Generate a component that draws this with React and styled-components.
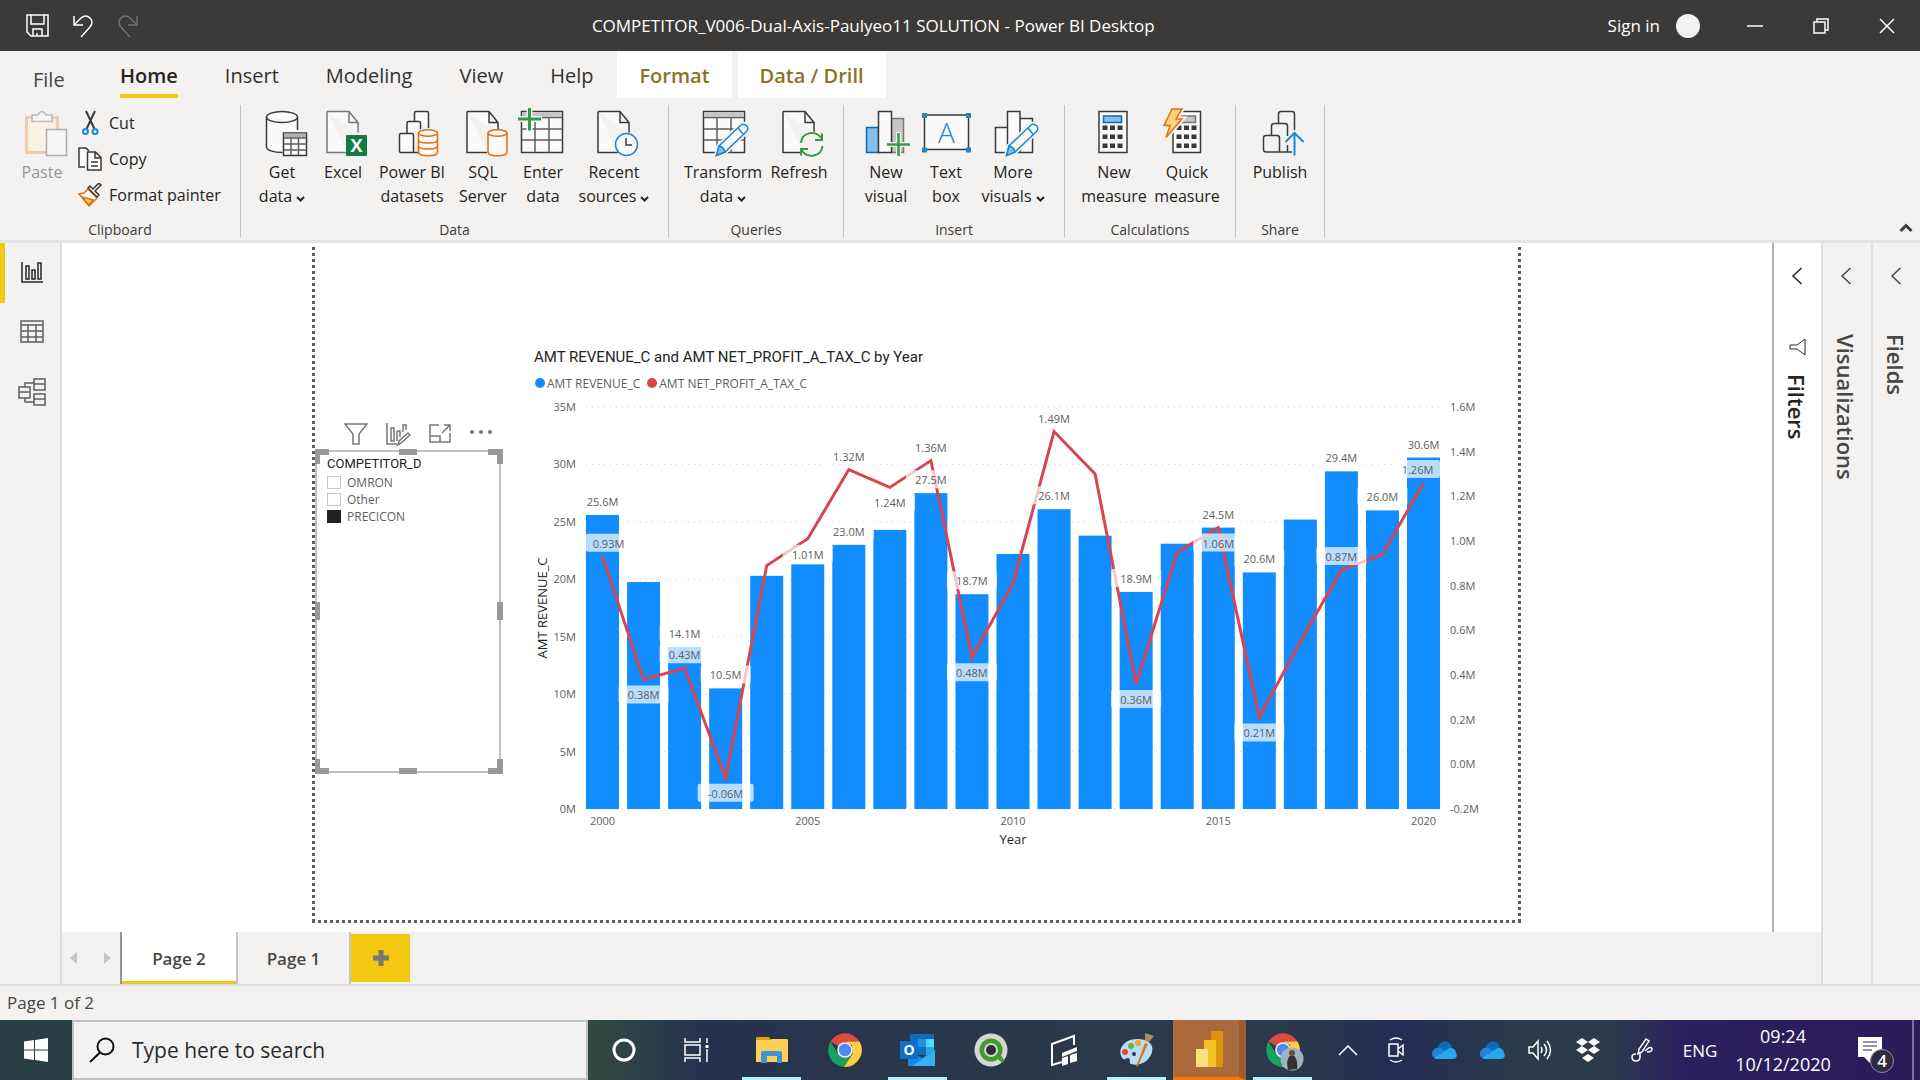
import React from 'react';
import styled, { createGlobalStyle, css } from 'styled-components';

const GlobalStyle = createGlobalStyle`
	* { box-sizing: border-box; }
	body {
		margin: 0;
		font-family: 'Open Sans', 'Noto Sans', sans-serif;
		color: #252423;
		background: #f3f2f1;
	}
	button, input {
		font-family: inherit;
		color: inherit;
	}
	button {
		border: 0;
		padding: 0;
		background: none;
	}
	svg {
		display: block;
		overflow: visible;
	}
`;

const Window = styled.div`
	display: flex;
	flex-direction: column;
	height: 100vh;
	overflow: hidden;
`;

/* title bar */

const TitleBar = styled.header`
	display: flex;
	align-items: center;
	flex: none;
	height: 51px;
	background: #3b3a38;
	color: #fff;
`;

const QuickAccess = styled.div`
	display: flex;
	gap: 23px;
	padding-left: 26px;
`;

const Title = styled.h1`
	flex: 1;
	margin: 0;
	font-size: 17px;
	font-weight: 400;
	line-height: 24px;
	text-align: center;
`;

const SignIn = styled.button`
	display: flex;
	align-items: center;
	gap: 16px;
	margin-right: 22px;
	font-size: 17px;
	line-height: 24px;
`;

const Avatar = styled.span`
	width: 24px;
	height: 24px;
	border-radius: 50%;
	background: #f3f2f1;
`;

const WindowButton = styled.button`
	display: flex;
	align-items: center;
	justify-content: center;
	width: 66px;
	height: 51px;
`;

/* ribbon */

const TabRow = styled.nav`
	display: flex;
	flex: none;
	height: 54px;
`;

const FileTab = styled.button`
	width: 97px;
	padding: 3px 0 0 33px;
	text-align: left;
	font-size: 20px;
	color: #484644;
`;

const Tab = styled.button`
	height: 47px;
	padding: 2px 24px 0 23px;
	font-size: 20px;
	line-height: 45px;
	color: #323130;

	span {
		display: block;
		height: 45px;
	}

	${(props) => props.$active && css`
		font-weight: 600;
		color: #252423;
		span { border-bottom: 4px solid #f2c811; }
	`}

	${(props) => props.$context && css`
		margin-right: 6px;
		padding: 2px 22px 0;
		font-weight: 600;
		color: #8c7324;
		background: #fff;
	`}
`;

const Ribbon = styled.section`
	display: flex;
	flex: none;
	height: 138px;
	border-bottom: 3px solid #e3e3e3;
`;

const Group = styled.div`
	display: flex;
	flex-direction: column;
	justify-content: space-between;
	width: ${(props) => props.$width}px;
	height: 133px;
	border-right: 1px solid #c8c6c4;
`;

const GroupBody = styled.div`
	display: flex;
	padding: 4px 0 0 ${(props) => props.$pad || 8}px;
`;

const GroupName = styled.div`
	font-size: 14px;
	line-height: 16px;
	text-align: center;
	color: #3b3a39;
`;

const BigButton = styled.button`
	display: flex;
	flex-direction: column;
	align-items: center;
	width: ${(props) => props.$width}px;
	font-size: 16px;
	line-height: 24px;
	white-space: nowrap;
	opacity: ${(props) => (props.disabled ? 0.45 : 1)};

	> svg { margin-bottom: 3px; }
	span svg {
		display: inline-block;
		margin-left: 4px;
	}
`;

const SmallButtons = styled.div`
	display: flex;
	flex-direction: column;
	gap: 8px;
	padding-left: 6px;
`;

const SmallButton = styled.button`
	display: flex;
	align-items: center;
	gap: 7px;
	height: 28px;
	font-size: 16px;
	line-height: 24px;
	white-space: nowrap;
`;

const CollapseButton = styled.button`
	align-self: flex-end;
	margin: 0 7px 8px auto;
`;

/* work area */

const Work = styled.div`
	display: flex;
	flex: 1;
	min-height: 0;
`;

const ViewNav = styled.nav`
	flex: none;
	width: 62px;
	border-right: 2px solid #e1dfdd;
`;

const ViewButton = styled.button`
	display: flex;
	align-items: center;
	justify-content: center;
	width: 60px;
	height: 60px;
	padding: ${(props) => (props.$active ? '0 2px 2px 0' : '0 0 2px 4px')};
	border-left: ${(props) => (props.$active ? '5px solid #f2c811' : '0')};
`;

const Center = styled.div`
	display: flex;
	flex-direction: column;
	flex: 1;
	min-width: 0;
`;

const Panels = styled.div`
	display: flex;
	flex: 1;
	min-height: 0;
`;

const Canvas = styled.main`
	flex: 1;
	min-width: 0;
	padding: 4px 251px 9px 250px;
	background: #fff;
`;

const dots = (dir) => `repeating-linear-gradient(${dir}, #5c5c5c 0 3px, transparent 3px 6px)`;

const ReportPage = styled.div`
	position: relative;
	height: 100%;
	background:
		${dots('to bottom')} left top / 3px 100% no-repeat,
		${dots('to bottom')} right top / 3px 100% no-repeat,
		${dots('to right')} left bottom / 100% 3px no-repeat;
`;

const Slicer = styled.section`
	position: absolute;
	left: 3px;
	top: 203px;
	width: 186px;
	height: 323px;
	padding: 3px 10px;
	border: 2px solid #c0c0c0;
`;

const handleSpots = {
	nw: 'left: -2px; top: -3px; width: 14px; height: 15px; border-width: 6px 0 0 5px;',
	ne: 'right: -4px; top: -3px; width: 15px; height: 15px; border-width: 6px 6px 0 0;',
	sw: 'left: -2px; bottom: -3px; width: 14px; height: 15px; border-width: 0 0 6px 5px;',
	se: 'right: -4px; bottom: -3px; width: 15px; height: 15px; border-width: 0 6px 6px 0;',
	n: 'left: 82px; top: -3px; width: 18px; border-width: 6px 0 0;',
	s: 'left: 82px; bottom: -3px; width: 18px; border-width: 6px 0 0;',
	w: 'left: -2px; top: 150px; height: 18px; border-width: 0 0 0 5px;',
	e: 'right: -4px; top: 150px; height: 18px; border-width: 0 0 0 6px;',
};

const Handle = styled.i`
	position: absolute;
	border: 0 solid #999;
	${(props) => handleSpots[props.$spot]}
`;

const VisualTools = styled.div`
	position: absolute;
	right: 5px;
	top: -30px;
	display: flex;
	gap: 18px;
`;

const SlicerTitle = styled.h2`
	margin: 0 0 1px;
	font-family: Roboto, sans-serif;
	font-size: 13px;
	font-weight: 400;
	line-height: 18px;
`;

const Option = styled.label`
	display: flex;
	align-items: center;
	gap: 6px;
	height: 17px;
	font-size: 12px;
	color: #605e5c;

	input {
		appearance: none;
		width: 14px;
		height: 13px;
		margin: 0;
		border: 1px solid #c8c8c8;
		background: #fff;
	}
	input:checked {
		border-color: #212121;
		background: #212121;
	}
`;

const ChartVisual = styled.section`
	position: absolute;
	left: 220px;
	right: 30px;
	top: 98px;
`;

const ChartTitle = styled.h2`
	margin: 0 0 4px 2px;
	font-family: Roboto, sans-serif;
	font-size: 15px;
	font-weight: 400;
	line-height: 24px;
`;

const Legend = styled.div`
	display: flex;
	align-items: center;
	gap: 7px;
	height: 20px;
	margin-left: 3px;
	font-size: 12px;
	color: #605e5c;
`;

const LegendItem = styled.span`
	display: flex;
	align-items: center;
	gap: 2px;

	&::before {
		content: '';
		width: 10px;
		height: 10px;
		border-radius: 50%;
		background: ${(props) => props.$color};
	}
`;

const Plot = styled.svg`
	width: 100%;
	font-size: 11px;
	fill: #605e5c;
`;

/* collapsed panes on the right */

const Pane = styled.aside`
	display: flex;
	flex-direction: column;
	align-items: center;
	flex: none;
	width: ${(props) => props.$width}px;
	padding: 24px 2px 0 0;
	border-left: ${(props) => props.$edge};
	background: ${(props) => props.$bg || '#f3f2f1'};
	color: ${(props) => props.$color || '#484644'};
`;

const PaneButton = styled.button`
	height: 18px;
	margin-bottom: ${(props) => props.$gap}px;
`;

const PaneName = styled.h2`
	margin: ${(props) => props.$gap || 0}px 0 0;
	writing-mode: vertical-rl;
	font-size: 22px;
	font-weight: 600;
	line-height: 26px;
`;

/* page tabs, status */

const PageTabs = styled.div`
	display: flex;
	flex: none;
	height: 52px;
`;

const PageArrows = styled.div`
	display: flex;
	align-items: center;
	justify-content: space-between;
	width: 58px;
	padding: 0 9px 0 8px;
`;

const PageTab = styled.button`
	width: ${(props) => (props.$active ? 118 : 113)}px;
	border-right: 2px solid #c8c6c4;
	font-size: 17px;
	font-weight: 600;
	color: #484644;

	${(props) => props.$active && css`
		border-left: 2px solid #979593;
		background: #fff;
		box-shadow: inset 0 -3px #f2c811;
	`}
`;

const AddPage = styled.button`
	display: flex;
	align-items: center;
	justify-content: center;
	width: 59px;
	height: 48px;
	margin-top: 2px;
	background: #f2c811;
`;

const StatusBar = styled.footer`
	flex: none;
	height: 36px;
	padding-left: 7px;
	border-top: 2px solid #e1dfdd;
	font-size: 17px;
	line-height: 33px;
	color: #484644;
`;

/* windows taskbar */

const Taskbar = styled.footer`
	display: flex;
	flex: none;
	height: 60px;
	color: #fff;
	background: linear-gradient(to right, #273e42 0, #273e42 72px, #334a3f 590px, #2b4149 640px, #26314f 700px,
		#28364c 860px, #2b3a4b 1150px, #2b3a4b 1280px, #242c53 1400px, #2b3b4b 1520px, #2b3b4b 1610px, #2c1f60 1680px, #2a1c59 100%);
`;

const StartButton = styled.button`
	display: flex;
	align-items: center;
	justify-content: center;
	width: 72px;
`;

const SearchBox = styled.label`
	display: flex;
	align-items: center;
	gap: 15px;
	width: 516px;
	padding-left: 15px;
	border: 2px solid #c0c0c0;
	background: #f2f2f2;
	color: #111;

	input {
		flex: 1;
		border: 0;
		background: none;
		font-size: 21px;
		outline: 0;
	}
	input::placeholder {
		color: #2b2b2b;
		opacity: 1;
	}
`;

const Apps = styled.div`
	display: flex;
	padding-right: 3px;
`;

const AppButton = styled.button`
	display: flex;
	align-items: center;
	justify-content: center;
	width: ${(props) => (props.$system ? 72 : 73)}px;

	${(props) => props.$open && css`
		background: linear-gradient(#b3f1ff, #b3f1ff) center bottom / 59px 3px no-repeat;
	`}
	${(props) => props.$current && css`
		padding-left: 7px;
		border-right: 7px solid #9c5d30;
		border-bottom: 3px solid #ff7300;
		background: #ab6a3b;
	`}
`;

const Tray = styled.div`
	display: flex;
	align-items: center;
	margin-left: auto;
`;

const TrayButton = styled.button`
	display: flex;
	align-items: center;
	justify-content: center;
	width: ${(props) => props.$width || 48}px;
	height: 60px;
	font-size: 17px;
`;

const Clock = styled.time`
	width: 110px;
	font-size: 18px;
	line-height: 28px;
	text-align: center;
`;

const Notifications = styled.button`
	position: relative;
	width: 74px;
	height: 60px;
	padding-left: 20px;
`;

const Badge = styled.span`
	position: absolute;
	left: 32px;
	top: 29px;
	width: 24px;
	height: 24px;
	border: 1px solid #918e9c;
	border-radius: 50%;
	background: #2d2b3e;
	font-size: 17px;
	font-weight: 600;
	line-height: 22px;
`;

const ShowDesktop = styled.button`
	width: 8px;
	height: 60px;
	border-left: 2px solid #77709a;
`;

/* icons */

const dark = '#3b3a39';
const gray = '#797775';
const orange = '#e0720f';
const green = '#37984b';
const blue = '#1e88cf';

const Icon = ({ w = 24, h = w, children, ...rest }) => (
	<svg width={w} height={h} viewBox={`0 0 ${w} ${h}`} fill="none" stroke="currentColor" aria-hidden="true" {...rest}>
		{children}
	</svg>
);

const BigIcon = ({ children }) => (
	<Icon w={48} stroke={dark} strokeWidth="1.5">{children}</Icon>
);

const Sheet = ({ color = dark }) => (
	<path d="M8 2.5h22l9 11v10M8 2.5v41h20M30 2.5v11h9" stroke={color} fill="#fafafa" />
);

const Cylinder = ({ x, rings }) => (
	<g stroke={orange} fill="#fafafa" strokeWidth="1.6">
		<path d={`M${x} 24v19c0 5 19 5 19 0V24`} />
		<ellipse cx={x + 9.5} cy="24" rx="9.5" ry="3.3" />
		{rings && <path fill="none" d={`M${x} 31c0 4 19 4 19 0M${x} 37c0 4 19 4 19 0`} />}
	</g>
);

const Grid = ({ x }) => (
	<g>
		<path d={`M${x} 2.5h41v41h-41z`} fill="#fafafa" />
		<path d={`M${x + 1} 3.5h39v4h-39z`} fill="#c8c6c4" stroke="none" />
		<path d={`M${x} 8.5h41M${x} 20h41M${x} 31h41M${x + 13.5} 8.5v35M${x + 27.5} 8.5v35`} stroke="#605e5c" />
	</g>
);

const Pencil = () => (
	<g>
		<path d="M17.5 46.5L20 37 42 16q3-2 6 1 2 3-1 6L26 43z" stroke="#f3f2f1" strokeWidth="5" />
		<path d="M17.5 46.5L20 37 42 16q3-2 6 1 2 3-1 6L26 43z" stroke={blue} fill="#fafafa" />
		<path d="M17.5 46.5L20 37q5 1 6 6z" stroke={blue} fill="#83beec" />
		<path d="M39 19l5 6" stroke={blue} />
	</g>
);

const Keys = ({ x }) => [19, 28, 37].map((y) => [0, 7.5, 15].map((dx) => (
	<rect key={`${y}-${dx}`} x={x + dx - 2.5} y={y - 2.5} width="5" height="4.5" fill={dark} stroke="none" />
)));

const ArrowDown = () => (
	<Icon w={9} h={6} stroke="#252423" strokeWidth="2"><path d="M1 1l3.5 3.5L8 1" /></Icon>
);

const icons = {
	getData: (
		<BigIcon>
			<path d="M8.5 8v30c0 3 7 5.5 16 5.5V26h15V8" fill="#fafafa" stroke="none" />
			<path d="M8.5 8v30c0 3 7 5.5 16 5.5M39.5 8v13" />
			<ellipse cx="24" cy="8" rx="15.5" ry="5.5" fill="#fafafa" />
			<path d="M25.5 24h23v22.5h-23z" fill="#fafafa" />
			<path d="M26 24.5h22v4H26z" fill="#b3b0ad" stroke="none" />
			<path d="M25.5 29h23M25.5 35h23M25.5 41h23M33 29v17M40.5 29v17" stroke="#605e5c" />
		</BigIcon>
	),
	excel: (
		<BigIcon>
			<Sheet color="#797775" />
			<rect x="27" y="26" width="21" height="21" rx="1" fill="#107c41" stroke="none" />
			<text x="37.5" y="43" fontSize="18" fontWeight="700" textAnchor="middle" fill="#fff" stroke="none">X</text>
		</BigIcon>
	),
	pbi: (
		<BigIcon>
			<g fill="#fafafa">
				<path d="M26.5 12V4q0-1.5 1.5-1.5h11q1.5 0 1.5 1.5v15" />
				<path d="M19 24V14q0-1.5 1.5-1.5H31q1.5 0 1.5 1.5v6" />
				<path d="M30 43.5H13q-1.5 0-1.5-1.5V26q0-1.5 1.5-1.5h11q1.5 0 1.5 1.5v17.5" />
			</g>
			<Cylinder x={30.5} rings />
		</BigIcon>
	),
	sql: <BigIcon><Sheet /><Cylinder x={29} /></BigIcon>,
	enter: (
		<BigIcon>
			<Grid x={2.5} />
			<path d="M-2 10h25M10.5-2v25" stroke="#f3f2f1" strokeWidth="6" />
			<path d="M-1 10h23M10.5-1v22.5" stroke={green} strokeWidth="3" />
		</BigIcon>
	),
	recent: (
		<BigIcon>
			<Sheet />
			<circle cx="36.5" cy="35.5" r="11" fill="#fafafa" stroke={blue} />
			<path d="M36 29v7h6" />
		</BigIcon>
	),
	transform: <BigIcon><Grid x={4.5} /><Pencil /></BigIcon>,
	refresh: (
		<BigIcon>
			<Sheet />
			<circle cx="37" cy="35.5" r="13" fill="#f3f2f1" stroke="none" />
			<path d="M26 34c1-12 16-13 21-4M47 24.5V31h-7M47.5 37c-1 11-15 13-21 4M26 46.5V40h7" stroke={green} strokeWidth="2" />
		</BigIcon>
	),
	newVisual: (
		<BigIcon>
			<path d="M4.5 18.5h12v25h-12z" fill="#83beec" stroke="#1068b0" />
			<path d="M29.5 9.5h12v34h-12z" fill="#c8c6c4" stroke="#797775" />
			<path d="M16.5 2.5h13v41h-13z" fill="#fafafa" />
			<path d="M24 35.5h25M36.5 23v25" stroke="#f3f2f1" strokeWidth="5" />
			<path d="M25 35.5h23M36.5 24v23" stroke={green} strokeWidth="2.5" />
		</BigIcon>
	),
	textBox: (
		<BigIcon>
			<path d="M2.5 6h44v34.5h-44z" fill="#fafafa" />
			<path d="M0 4h5v5H0zM44 4h5v5h-5zM0 38.5h5v5H0zM44 38.5h5v5h-5z" fill={blue} stroke="none" />
			<text x="24.5" y="34" fontSize="28" fontWeight="300" textAnchor="middle" fill={blue} stroke="none">A</text>
		</BigIcon>
	),
	moreVisuals: (
		<BigIcon>
			<path d="M6.5 18.5h12v25h-12zM31 9.5h12.5v34H31zM18.5 2.5H31v41H18.5z" fill="#fafafa" />
			<Pencil />
		</BigIcon>
	),
	newMeasure: (
		<BigIcon>
			<path d="M9 2.5h28v41H9z" fill="#fafafa" />
			<path d="M13.5 7h18v6.5h-18z" fill="#83beec" stroke="#1068b0" />
			<Keys x={15} />
		</BigIcon>
	),
	quickMeasure: (
		<BigIcon>
			<path d="M10 2.5h27.5v41H10z" fill="#fafafa" />
			<path d="M14.5 7h18v6.5h-18z" fill="#c8c6c4" stroke="#797775" />
			<Keys x={16} />
			<path d="M9 0h10l-6 10h6L3 28.500l4-12H1z" stroke="#f3f2f1" strokeWidth="5" />
			<path d="M9 0h10l-6 10h6L3 28.500l4-12H1z" fill="#fbd27c" stroke={orange} />
		</BigIcon>
	),
	publish: (
		<BigIcon>
			<path d="M22.5 14V5q0-2.5 2.5-2.5h11q2.5 0 2.5 2.5v16M15.5 26v-9q0-2.5 2.5-2.5h11q2.5 0 2.5 2.5v10M31.5 36v7M36 43H10q-2.5 0-2.5-2.5V29q0-2.5 2.5-2.5h11q2.5 0 2.5 2.5v14" />
			<path d="M38.5 46.5V24M29.5 33l9-9 9 9" stroke={blue} strokeWidth="2" />
		</BigIcon>
	),
	paste: (
		<BigIcon>
			<path d="M8.5 8.5h31v35h-31z" fill="#fdf3d4" stroke="#eda05e" strokeWidth="3" />
			<path d="M14 12.5V6h6q4-7 8 0h6v6.5z" fill="#fafafa" stroke="#797775" />
			<path d="M28.5 20.5h20v26h-20z" fill="#fafafa" stroke="#605e5c" />
		</BigIcon>
	),
	cut: (
		<Icon stroke={dark} strokeWidth="2">
			<path d="M8 0l8.5 18M17 0L8.5 18" />
			<circle cx="7.5" cy="20.5" r="2.5" stroke={blue} />
			<circle cx="17" cy="20.5" r="2.5" stroke={blue} />
		</Icon>
	),
	copy: (
		<Icon stroke={dark} strokeWidth="1.5">
			<path d="M7 20H1V1h7l3 3" fill="#fafafa" />
			<path d="M9.5 5h8l5.5 5.5V23H9.5zM17 5v6h6M13 15h7M13 19h7" fill="#fafafa" />
		</Icon>
	),
	painter: (
		<Icon strokeWidth="1.5">
			<path d="M1 11l5-1 4-4 9 9-3 3-5 5z" stroke={orange} fill="#fafafa" />
			<path d="M4 14l11 3-4 5z" stroke={orange} fill="#fbd27c" />
			<path d="M10 5l9 9 2-2-4-4 6-6-1.5-1.5L20 1l-5 5-3-3z" stroke={dark} fill="#fafafa" />
		</Icon>
	),
};

const ribbonGroups = [
	{ name: 'Data', width: 428, items: [
		['getData', ['Get', 'data'], 66, true],
		['excel', ['Excel'], 56],
		['pbi', ['Power BI', 'datasets'], 82],
		['sql', ['SQL', 'Server'], 60],
		['enter', ['Enter', 'data'], 60],
		['recent', ['Recent', 'sources'], 82, true],
	] },
	{ name: 'Queries', width: 175, items: [
		['transform', ['Transform', 'data'], 92, true],
		['refresh', ['Refresh'], 60],
	] },
	{ name: 'Insert', width: 221, items: [
		['newVisual', ['New', 'visual'], 68],
		['textBox', ['Text', 'box'], 52],
		['moreVisuals', ['More', 'visuals'], 82, true],
	] },
	{ name: 'Calculations', width: 171, pad: 12, items: [
		['newMeasure', ['New', 'measure'], 74],
		['quickMeasure', ['Quick', 'measure'], 72],
	] },
	{ name: 'Share', width: 89, items: [
		['publish', ['Publish'], 72],
	] },
];

const RibbonBar = () => (
	<Ribbon>
		<Group $width={241}>
			<GroupBody $pad={12}>
				<BigButton $width={60} disabled>{icons.paste}<span>Paste</span></BigButton>
				<SmallButtons>
					<SmallButton>{icons.cut}Cut</SmallButton>
					<SmallButton>{icons.copy}Copy</SmallButton>
					<SmallButton>{icons.painter}Format painter</SmallButton>
				</SmallButtons>
			</GroupBody>
			<GroupName>Clipboard</GroupName>
		</Group>
		{ribbonGroups.map((group) => (
			<Group key={group.name} $width={group.width}>
				<GroupBody $pad={group.pad}>
					{group.items.map(([icon, lines, width, menu]) => (
						<BigButton key={icon} $width={width}>
							{icons[icon]}
							{lines.map((line, i) => (
								<span key={line}>{line}{menu && i === 1 && <ArrowDown />}</span>
							))}
						</BigButton>
					))}
				</GroupBody>
				<GroupName>{group.name}</GroupName>
			</Group>
		))}
		<CollapseButton aria-label="Collapse ribbon">
			<Icon w={14} h={9} stroke={dark} strokeWidth="3"><path d="M1.5 8L7 2.5 12.5 8" /></Icon>
		</CollapseButton>
	</Ribbon>
);

/* chart */

// year, revenue (M), net profit (M), revenue label, profit label and its side
const series = [
	[2000, 25.6, 0.93, '25.6M', '0.93M', 'up'],
	[2001, 19.76, 0.38, '', '0.38M', 'down'],
	[2002, 14.1, 0.43, '14.1M', '0.43M', 'up'],
	[2003, 10.5, -0.06, '10.5M', '-0.06M', 'down'],
	[2004, 20.3, 0.89],
	[2005, 21.3, 1.01, '', '1.01M', 'down'],
	[2006, 23, 1.32, '23.0M', '1.32M', 'up'],
	[2007, 24.3, 1.24, '', '1.24M', 'down'],
	[2008, 27.5, 1.36, '27.5M', '1.36M', 'up'],
	[2009, 18.7, 0.48, '18.7M', '0.48M', 'down'],
	[2010, 22.2, 0.81],
	[2011, 26.1, 1.49, '26.1M', '1.49M', 'up'],
	[2012, 23.8, 1.3],
	[2013, 18.9, 0.36, '18.9M', '0.36M', 'down'],
	[2014, 23.1, 0.95],
	[2015, 24.5, 1.06, '24.5M', '1.06M', 'down'],
	[2016, 20.6, 0.21, '20.6M', '0.21M', 'down'],
	[2017, 25.2, 0.55],
	[2018, 29.4, 0.87, '29.4M', '0.87M', 'up'],
	[2019, 26, 0.94, '26.0M'],
	[2020, 30.6, 1.26, '30.6M', '1.26M', 'up'],
];

const plotLeft = 54;
const plotRight = 908;
const top = 14;
const bottom = 416;
const barX = (i) => plotLeft + i * 41.05;
const midX = (i) => barX(i) + 16.5;
const revenueY = (v) => bottom - (v / 35) * (bottom - top);
const profitY = (v) => bottom - ((v + 0.2) / 1.8) * (bottom - top);

const DataLabel = ({ x, y, text }) => {
	const half = text.length > 5 ? 28 : 25;
	const left = Math.max(x - half, plotLeft);
	const right = Math.min(x + half, plotRight);
	return (
		<g>
			<rect x={left} y={y - 10} width={right - left} height="18" rx="2" fill="#fff" fillOpacity="0.7" />
			<text x={x} y={y + 4} textAnchor="middle">{text}</text>
		</g>
	);
};

const ComboChart = () => (
	<Plot viewBox="0 0 959 464" role="img" aria-label="Revenue and net profit by year">
		{[0, 5, 10, 15, 20, 25, 30, 35].map((v) => (
			<g key={v}>
				<line x1={plotLeft} x2={plotRight} y1={revenueY(v)} y2={revenueY(v)} stroke="#d0d0d0" strokeDasharray="1 5" />
				<text x="44" y={revenueY(v) + 4} textAnchor="end">{v}M</text>
			</g>
		))}
		{[-0.2, 0, 0.2, 0.4, 0.6, 0.8, 1, 1.2, 1.4, 1.6].map((v) => (
			<text key={v} x="918" y={profitY(v) + 4}>{v.toFixed(1)}M</text>
		))}
		{series.map(([year, revenue], i) => (
			<rect key={year} x={barX(i)} y={revenueY(revenue)} width="33" height={bottom - revenueY(revenue)} fill="#118dff" />
		))}
		<polyline
			points={series.map((row, i) => `${midX(i)},${profitY(row[2])}`).join(' ')}
			fill="none"
			stroke="#d64550"
			strokeWidth="3"
		/>
		{series.map(([year, revenue, profit, revenueText, profitText, side], i) => {
			const shift = i === 0 ? 6 : i === 20 ? -6 : 0;
			return (
				<g key={year}>
					{revenueText && <DataLabel x={midX(i)} y={revenueY(revenue) - 13} text={revenueText} />}
					{profitText && (
						<DataLabel x={midX(i) + shift} y={profitY(profit) + (side === 'up' ? -13 : 16)} text={profitText} />
					)}
					{year % 5 === 0 && <text x={midX(i)} y="432" textAnchor="middle">{year}</text>}
				</g>
			);
		})}
		<text x="481" y="451" textAnchor="middle" fontSize="13" fill="#252423">Year</text>
		<text transform="translate(15 215) rotate(-90)" textAnchor="middle" fontSize="13" fill="#252423">AMT REVENUE_C</text>
	</Plot>
);

const Report = () => (
	<ReportPage>
		<Slicer>
			<VisualTools>
				<button aria-label="Filters">
					<Icon stroke={gray} strokeWidth="1.5"><path d="M1 2h22l-8 10v10H9V12z" /></Icon>
				</button>
				<button aria-label="Edit visual">
					<Icon stroke={gray} strokeWidth="1.5"><path d="M1 1v21h10M5 6h3v13H5zM11 9h3v6M11 9v10M17 10V3h3v5M12 23l1-4 9-8 2 2-9 8z" /></Icon>
				</button>
				<button aria-label="Focus mode">
					<Icon stroke={gray} strokeWidth="1.5"><path d="M11 3H2v17h20v-9M2 14h10v6M14 11l8-8M16 3h6v6" /></Icon>
				</button>
				<button aria-label="More options">
					<Icon stroke="none" fill={gray}><circle cx="2" cy="10" r="2" /><circle cx="11" cy="10" r="2" /><circle cx="20" cy="10" r="2" /></Icon>
				</button>
			</VisualTools>
			<SlicerTitle>COMPETITOR_D</SlicerTitle>
			<Option><input type="checkbox" />OMRON</Option>
			<Option><input type="checkbox" />Other</Option>
			<Option><input type="checkbox" defaultChecked />PRECICON</Option>
			{Object.keys(handleSpots).map((spot) => <Handle key={spot} $spot={spot} />)}
		</Slicer>
		<ChartVisual>
			<ChartTitle>AMT REVENUE_C and AMT NET_PROFIT_A_TAX_C by Year</ChartTitle>
			<Legend>
				<LegendItem $color="#118dff">AMT REVENUE_C</LegendItem>
				<LegendItem $color="#d64550">AMT NET_PROFIT_A_TAX_C</LegendItem>
			</Legend>
			<ComboChart />
		</ChartVisual>
	</ReportPage>
);

const PaneChevron = ({ gap }) => (
	<PaneButton $gap={gap} aria-label="Expand pane">
		<Icon w={10} h={18} strokeWidth="1.5"><path d="M9.5 1L1 9l8.5 8" /></Icon>
	</PaneButton>
);

/* taskbar drawings */

const ChromeLogo = ({ children }) => (
	<Icon w={34} stroke="none">
		<path d="M17 17L2.5 8.5A17 17 0 0 1 31.5 8.5H17z" fill="#dd4b3e" />
		<path d="M2.5 8.5A17 17 0 0 0 16 34l8-13-7-4-7 4z" fill="#1aa15f" />
		<path d="M31.5 8.5A17 17 0 0 1 16 34l8.5-13L24 12l-7-3.5z" fill="#ffcd40" />
		<circle cx="17" cy="17" r="7.8" fill="#f1f1f1" />
		<circle cx="17" cy="17" r="6.2" fill="#4d8af5" />
		{children}
	</Icon>
);

const Cloud = () => (
	<Icon w={26} h={20} stroke="none">
		<path d="M6 9c2-9 12-10 15-2l-8 6z" fill="#0f6cbd" />
		<path d="M1 14c0-5 5-8 10-5l8 9H5c-3 0-4-2-4-4z" fill="#1f86dd" />
		<path d="M3 18L17 9c2-2 8-1 8 4 2 3 0 6-3 6H5z" fill="#2ba6ee" />
	</Icon>
);

const SystemTaskbar = () => (
	<Taskbar>
		<StartButton aria-label="Start">
			<Icon w={24} stroke="none" fill="#fff">
				<path d="M0 3.5L10 2v9.5H0zM11 2l13-2v11.5H11zM0 12.5h10V22L0 20.5zM11 12.5h13V24l-13-2z" />
			</Icon>
		</StartButton>
		<SearchBox>
			<Icon w={26} strokeWidth="2"><circle cx="16.5" cy="9.5" r="8" /><path d="M11 15.5L1 25" /></Icon>
			<input type="text" placeholder="Type here to search" aria-label="Search" />
		</SearchBox>
		<Apps>
			<AppButton $system aria-label="Cortana">
				<Icon w={24} strokeWidth="3"><circle cx="12" cy="12" r="10" /></Icon>
			</AppButton>
			<AppButton $system aria-label="Task view">
				<Icon w={26} strokeWidth="1.5"><path d="M2 1v4h15V1M2 8h15v10H2zM2 25v-4h15v4M24 1v5M24 12v13" /><path d="M22.5 8h3v3h-3z" fill="#fff" stroke="none" /></Icon>
			</AppButton>
		</Apps>
		<Apps>
			<AppButton $open aria-label="File Explorer">
				<Icon w={32} h={28} stroke="none">
					<path d="M0 2q0-1 1-1h12l2 3h16v6H0z" fill="#e0a008" />
					<path d="M0 4h14l2-1h15q1 0 1 1v21q0 1-1 1H0z" fill="#fdcf55" />
					<path d="M5 17q0-2 2-2h17q2 0 2 2v10h-5v-7H11v7H5z" fill="#3a94dc" />
				</Icon>
			</AppButton>
			<AppButton aria-label="Chrome"><ChromeLogo /></AppButton>
			<AppButton $open aria-label="Outlook">
				<Icon w={36} h={34} stroke="none">
					<path d="M10 2q0-1 1-1h22q1 0 1 1v20H10z" fill="#0f6cbd" />
					<path d="M18 6h8v8h-8z" fill="#1c8fe0" /><path d="M26 6h8v8h-8z" fill="#50d9ff" />
					<path d="M26 14h8v8h-8z" fill="#29a8ea" />
					<path d="M8 17l14 8 13-8v15q0 1-1 1H9q-1 0-1-1z" fill="#1b87de" />
					<path d="M35 17L12 33h22q1 0 1-1z" fill="#35b0f0" />
					<rect x="0" y="8" width="18" height="18" rx="1" fill="#0f6ecd" />
					<text x="9" y="22" fontSize="14" fontWeight="700" textAnchor="middle" fill="#fff">O</text>
				</Icon>
			</AppButton>
			<AppButton aria-label="Qlik">
				<Icon w={34} stroke="none">
					<circle cx="17" cy="17" r="16.5" fill="#d6d6d6" />
					<circle cx="17" cy="17" r="11.5" fill="#409a2c" />
					<path d="M22 24l4-3 4 6-2 3z" fill="#409a2c" />
					<circle cx="17" cy="17" r="7" fill="#d6d6d6" />
					<circle cx="17" cy="17" r="5" fill="#2d3133" />
				</Icon>
			</AppButton>
			<AppButton aria-label="Desktop app">
				<Icon w={28} h={32} strokeWidth="2">
					<path d="M12 28l-10 3V10L24 2v9" />
					<path d="M12 19l15-6v4l-15 6zM12 24l6-2v8l-6 2zM20 21l7-2v8l-7 2z" fill="#fff" stroke="none" />
				</Icon>
			</AppButton>
			<AppButton $open aria-label="Paint">
				<Icon w={36} h={34} stroke="none">
					<path d="M4 26c-7-9 1-20 14-20 12 0 17 6 15 13-2 9-13 15-21 12-3-1 1-5-3-6-2 0-3 2-5 1z" fill="#b9def2" />
					<circle cx="6" cy="19" r="3" fill="#e8453c" /><circle cx="12" cy="13" r="3" fill="#5cb947" />
					<circle cx="19" cy="10" r="3" fill="#f7a823" /><circle cx="15" cy="21" r="2" fill="#2b3a4b" />
					<path d="M26 10l3 1-10 22-2 1z" fill="#d9761c" />
					<path d="M26 0l9 3-5 6-4-1z" fill="#b7895c" />
				</Icon>
			</AppButton>
			<AppButton $current aria-label="Power BI">
				<Icon w={28} h={36} stroke="none">
					<path d="M15 0h12v36H15z" fill="#d9940b" />
					<path d="M8 9h12v27H8z" fill="#f2c124" />
					<path d="M0 18h12v18H0z" fill="#f9e27b" />
				</Icon>
			</AppButton>
			<AppButton $open aria-label="Chrome, profile">
				<ChromeLogo>
					<circle cx="26" cy="26" r="11.5" fill="#9fb2c0" />
					<path d="M22 37c-2-9 0-14 4-15 4 1 6 6 5 14z" fill="#33302f" />
					<circle cx="26" cy="20" r="3" fill="#6d4e3c" />
				</ChromeLogo>
			</AppButton>
		</Apps>
		<Tray>
			<TrayButton aria-label="Show hidden icons"><Icon w={20} h={12} strokeWidth="1.5"><path d="M1 11l9-9 9 9" /></Icon></TrayButton>
			<TrayButton aria-label="Meet now">
				<Icon w={18} h={26} strokeWidth="1.5"><path d="M2 7h9v12H2zM11 12l5-4v10l-5-4M3 3q6-4 12 0M3 23q6 4 12 0" /></Icon>
			</TrayButton>
			<TrayButton aria-label="OneDrive"><Cloud /></TrayButton>
			<TrayButton aria-label="OneDrive"><Cloud /></TrayButton>
			<TrayButton aria-label="Volume">
				<Icon w={24} h={22} strokeWidth="1.5"><path d="M1 8h4l5-6v18l-5-6H1zM13 8q2 3 0 6M16 5q5 6 0 12M19 2q7 9 0 18" /></Icon>
			</TrayButton>
			<TrayButton aria-label="Dropbox">
				<Icon w={24} stroke="none" fill="#fff"><path d="M6 0l6 4-6 4-6-4zM18 0l6 4-6 4-6-4zM6 8l6 4-6 4-6-4zM18 8l6 4-6 4-6-4zM12 16l6 4-6 4-6-4z" /></Icon>
			</TrayButton>
			<TrayButton $width={60} aria-label="Windows Ink">
				<Icon w={22} h={24} strokeWidth="1.5"><path d="M7 16l1-5 7-10 3 2-7 11zM9 14v5q0 4-4 4t-4-4q0-3 4-3M14 13q6-6 7-2 0 3-5 3" /></Icon>
			</TrayButton>
			<TrayButton $width={56}>ENG</TrayButton>
			<Clock>09:24<br />10/12/2020</Clock>
			<Notifications aria-label="Notifications">
				<Icon w={24} h={26} stroke="none"><path d="M0 0h24v20H13l-1 6-6-6H0z" fill="#fff" /><path d="M5 5h14M5 9h14M5 13h9" stroke="#2c1f60" /></Icon>
				<Badge>4</Badge>
			</Notifications>
			<ShowDesktop aria-label="Show desktop" />
		</Tray>
	</Taskbar>
);

const App = () => (
	<Window>
		<GlobalStyle />
		<TitleBar>
			<QuickAccess>
				<button aria-label="Save"><Icon w={23} strokeWidth="1.5"><path d="M1 1h21v21H5l-4-4zM5 1v9h13V1M7 22v-7h9v7M11 19v3" /></Icon></button>
				<button aria-label="Undo"><Icon w={22} strokeWidth="1.5"><path d="M2 1v9h9M2 10l7-7q5-4 9 0 4 4 0 9L9 22" /></Icon></button>
				<button aria-label="Redo"><Icon w={22} strokeWidth="1.5" stroke="#72706e"><path d="M20 1v9h-9M20 10l-7-7q-5-4-9 0-4 4 0 9l9 10" /></Icon></button>
			</QuickAccess>
			<Title>COMPETITOR_V006-Dual-Axis-Paulyeo11 SOLUTION - Power BI Desktop</Title>
			<SignIn>Sign in<Avatar /></SignIn>
			<WindowButton aria-label="Minimize"><Icon w={16} strokeWidth="1.5"><path d="M0 8h16" /></Icon></WindowButton>
			<WindowButton aria-label="Restore"><Icon w={16} strokeWidth="1.5"><path d="M1 4h11v11H1zM4 4V1h11v11h-3" /></Icon></WindowButton>
			<WindowButton aria-label="Close"><Icon w={16} strokeWidth="1.5"><path d="M1 1l14 14M15 1L1 15" /></Icon></WindowButton>
		</TitleBar>
		<TabRow>
			<FileTab>File</FileTab>
			<Tab $active><span>Home</span></Tab>
			<Tab><span>Insert</span></Tab>
			<Tab><span>Modeling</span></Tab>
			<Tab><span>View</span></Tab>
			<Tab><span>Help</span></Tab>
			<Tab $context><span>Format</span></Tab>
			<Tab $context><span>Data / Drill</span></Tab>
		</TabRow>
		<RibbonBar />
		<Work>
			<ViewNav>
				<ViewButton $active aria-label="Report view">
					<Icon w={22} stroke="#252423" strokeWidth="1.5"><path d="M1 1v20h21M5 5h3v13H5zM11 9h3v9h-3zM17 2h3v16h-3z" /></Icon>
				</ViewButton>
				<ViewButton aria-label="Data view">
					<Icon w={24} stroke="#605e5c" strokeWidth="1.5"><path d="M1 1h22v21H1zM1 5h22M1 11h22M1 17h22M8 5v17M16 5v17" /></Icon>
				</ViewButton>
				<ViewButton aria-label="Model view">
					<Icon w={28} stroke="#605e5c" strokeWidth="1.5"><path d="M1 9h11v11H1zM1 14h11M16 1h11v11H16zM16 6h11M16 16h11v11H16zM16 21h11M7 9V5h9M7 20v4h9" /></Icon>
				</ViewButton>
			</ViewNav>
			<Center>
				<Panels>
					<Canvas><Report /></Canvas>
					<Pane $width={49} $edge="2px solid #b3b0ad" $bg="#fff" $color="#252423">
						<PaneChevron gap={53} />
						<Icon w={18} h={18}><path d="M17 1v16L9 11H2V7h7z" /></Icon>
						<PaneName $gap={18}>Filters</PaneName>
					</Pane>
				</Panels>
				<PageTabs>
					<PageArrows>
						<Icon w={8} h={12} stroke="none" fill="#c8c6c4"><path d="M7 0v12L0 6z" /></Icon>
						<Icon w={8} h={12} stroke="none" fill="#c8c6c4"><path d="M1 0v12l7-6z" /></Icon>
					</PageArrows>
					<PageTab $active>Page 2</PageTab>
					<PageTab>Page 1</PageTab>
					<AddPage aria-label="New page">
						<Icon w={16} stroke="#797775" strokeWidth="5"><path d="M0 8h16M8 0v16" /></Icon>
					</AddPage>
				</PageTabs>
			</Center>
			<Pane $width={50} $edge="2px solid #e1dfdd">
				<PaneChevron gap={49} />
				<PaneName>Visualizations</PaneName>
			</Pane>
			<Pane $width={49} $edge="2px solid #e1dfdd">
				<PaneChevron gap={49} />
				<PaneName>Fields</PaneName>
			</Pane>
		</Work>
		<StatusBar>Page 1 of 2</StatusBar>
		<SystemTaskbar />
	</Window>
);

export default App;
